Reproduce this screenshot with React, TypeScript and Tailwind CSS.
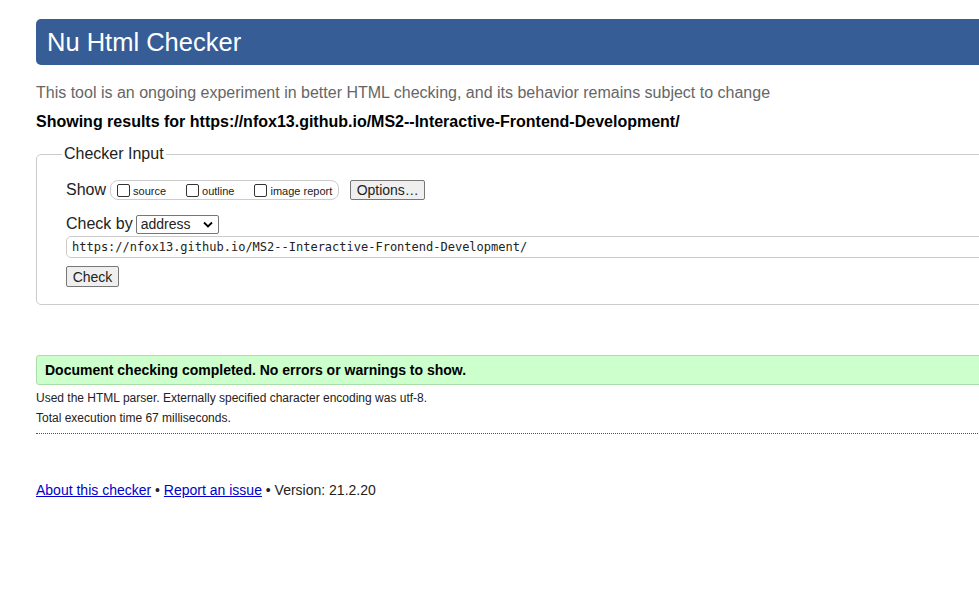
import React from "react";

const url = "https://nfox13.github.io/MS2--Interactive-Frontend-Development/";

function Box({ label }: { label: string }) {
  return (
    <label className="flex items-center">
      <span className="inline-block w-[13px] h-[13px] border border-[#333] rounded-[2px] bg-white mr-[3px]" />
      <span className="text-[11px] text-[#222] mt-[3px]">{label}</span>
    </label>
  );
}

export default function App() {
  return (
    <div className="w-[979px] h-[589px] overflow-hidden bg-white font-['Liberation_Sans',Arial,sans-serif] text-[#222]">
      <div className="w-[1100px] pl-[36px] pt-[19px]">
        <header className="h-[46px] bg-[#365d95] rounded-l-[5px] flex items-center pl-[11px]">
          <h1 className="text-[25.5px] text-white leading-none mt-[1px]">Nu Html Checker</h1>
        </header>

        <p className="mt-[18px] text-[16px] text-[#666] leading-[20px]">
          This tool is an ongoing experiment in better HTML checking, and its behavior remains subject to change
        </p>
        <p className="mt-[9px] text-[16px] font-bold text-black leading-[20px]">
          Showing results for {url}
        </p>

        <fieldset className="mt-[10px] h-[163px] border border-[#ccc] rounded-l-[5px] pl-[29px] pr-0">
          <legend className="ml-[-4px] px-[2px] text-[16px] text-[#222]">Checker Input</legend>

          <div className="flex items-center mt-[14px] h-[20px]">
            <span className="text-[16px]">Show</span>
            <div className="ml-[4px] flex items-center gap-[20px] h-[20px] border border-[#ccc] rounded-[8px] pl-[6px] pr-[6px]">
              <Box label="source" />
              <Box label="outline" />
              <Box label="image report" />
            </div>
            <button className="ml-[11px] h-[20px] w-[75px] border border-[#777] rounded-[2px] bg-[#efefef] text-[14px] leading-none">
              Options…
            </button>
          </div>

          <div className="flex items-center mt-[14px] h-[20px]">
            <span className="text-[16px]">Check by</span>
            <div className="ml-[3px] w-[83px] h-[19px] border border-[#767676] rounded-[2px] flex items-center justify-between pl-[4px] pr-[5px] text-[14px]">
              <span className="leading-none">address</span>
              <svg width="10" height="7" viewBox="0 0 10 7">
                <path d="M1 1.5 L5 5.5 L9 1.5" fill="none" stroke="#000" strokeWidth="1.8" />
              </svg>
            </div>
          </div>

          <div className="mt-[2px] h-[22px] border border-[#ccc] rounded-l-[5px] flex items-center pl-[5px] font-['DejaVu_Sans_Mono',monospace] text-[12px] text-[#222]">
            {url}
          </div>

          <button className="mt-[8px] h-[21px] w-[53px] border border-[#777] rounded-[2px] bg-[#efefef] text-[14px] leading-none">
            Check
          </button>
        </fieldset>

        <div className="mt-[50px] h-[30px] bg-[#ccffcc] border border-[#aaddaa] rounded-l-[3px] flex items-center pl-[8px]">
          <span className="text-[14px] font-bold text-black">Document checking completed. No errors or warnings to show.</span>
        </div>

        <p className="mt-[5px] text-[12px] text-[#222] leading-[16px]">
          Used the HTML parser. Externally specified character encoding was utf-8.
        </p>
        <p className="mt-[4px] text-[12px] text-[#222] leading-[16px]">Total execution time 67 milliseconds.</p>
        <div className="mt-[7px] border-t border-dotted border-[#555]" />

        <p className="mt-[46px] text-[14px] text-[#222]">
          <a href="#" className="underline text-[#00c]">About this checker</a>
          {" • "}
          <a href="#" className="underline text-[#00c]">Report an issue</a>
          {" • Version: 21.2.20"}
        </p>
      </div>
    </div>
  );
}
